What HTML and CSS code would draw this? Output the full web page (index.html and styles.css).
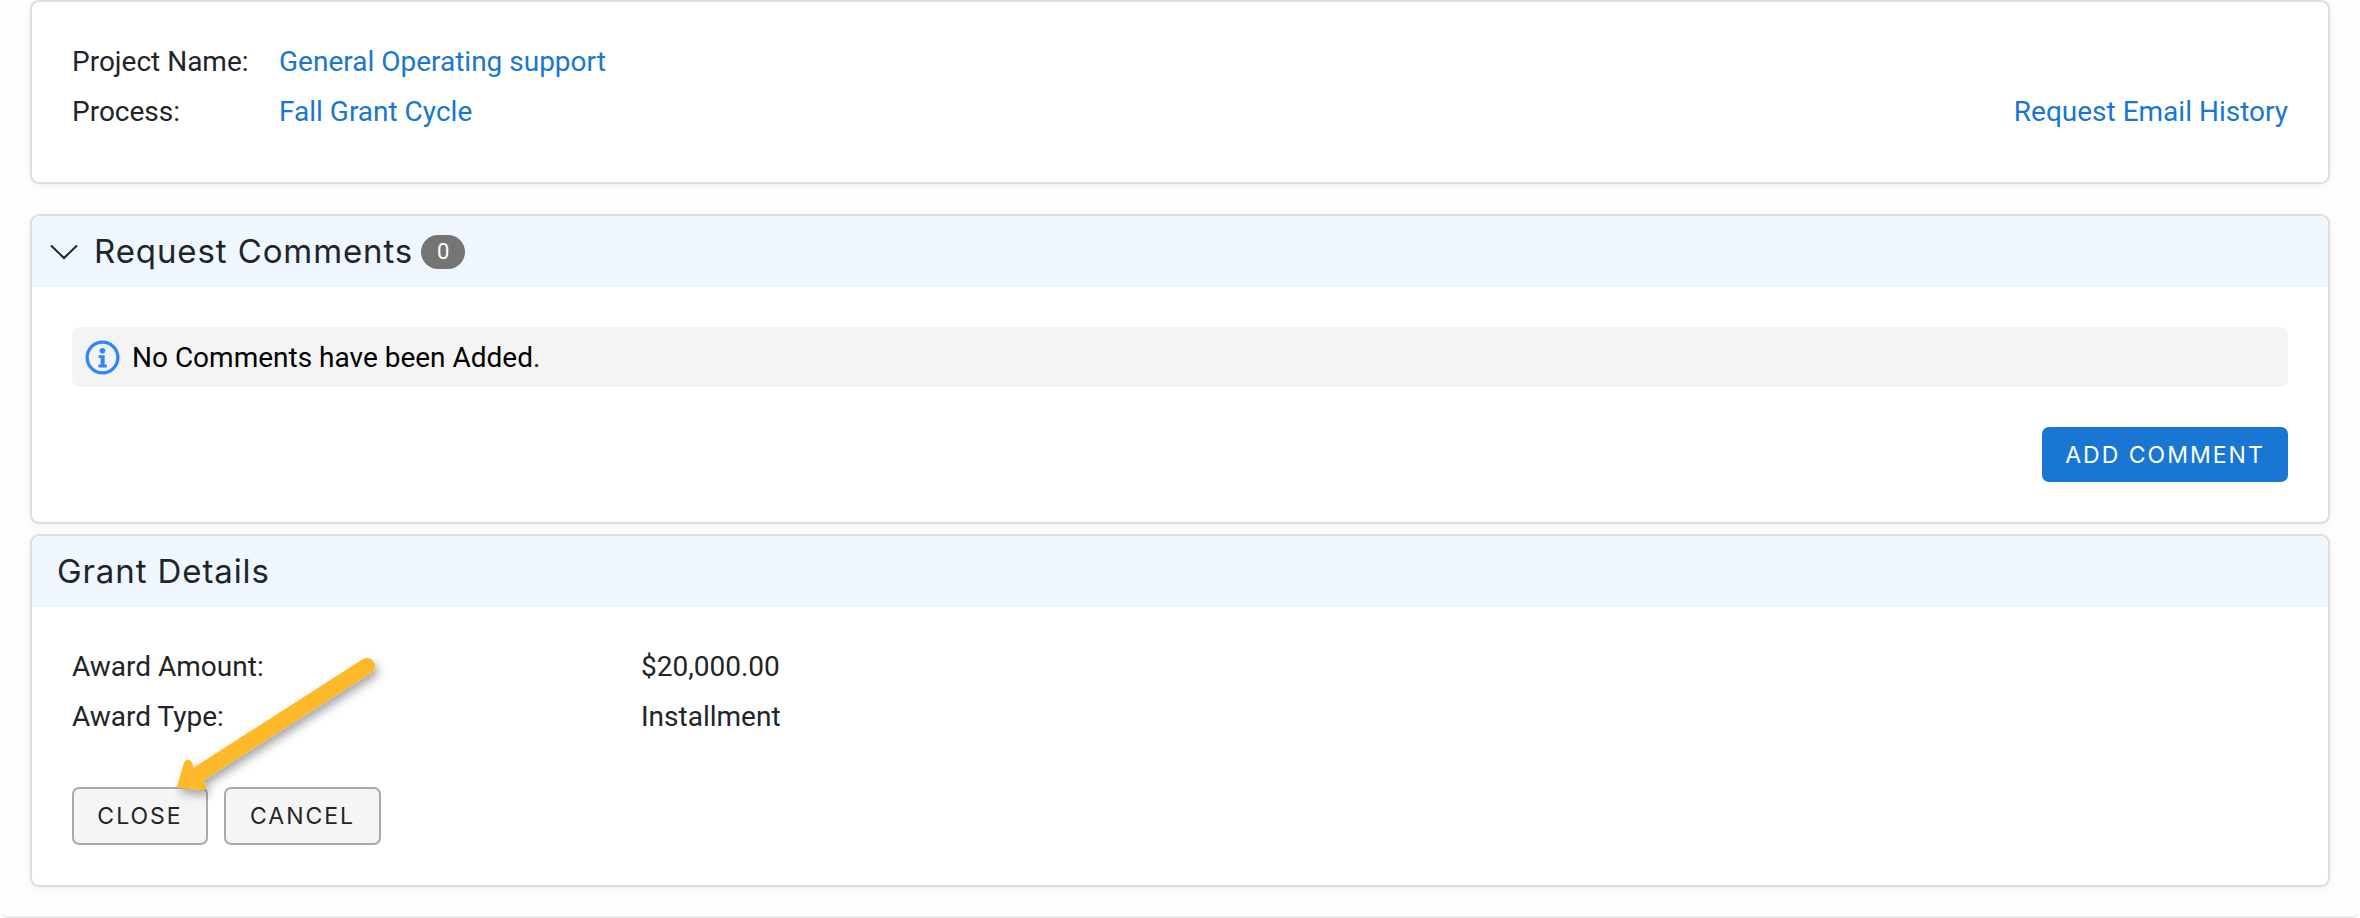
FILE: index.html
```html
<!DOCTYPE html>
<html lang="en">
<head>
<meta charset="utf-8">
<title>Grant Request</title>
<link rel="stylesheet" href="styles.css">
</head>
<body>
<main class="page">
  <section class="card summary">
    <div class="summary-rows">
      <div class="row"><span class="label">Project Name:</span><a class="link" href="#">General Operating support</a></div>
      <div class="row row-split">
        <span class="row-main"><span class="label">Process:</span><a class="link" href="#">Fall Grant Cycle</a></span>
        <a class="link" href="#">Request Email History</a>
      </div>
    </div>
  </section>

  <section class="card comments">
    <header class="card-head head-comments">
      <svg class="chevron" viewBox="0 0 28 16" width="28" height="16" aria-hidden="true"><path d="M1 1.5 14 14 27 1.5" fill="none" stroke="#212529" stroke-width="2"/></svg>
      <h2 class="title">Request Comments</h2>
      <span class="badge">0</span>
    </header>
    <div class="comments-body">
      <div class="notice">
        <svg class="info" viewBox="0 0 36 36" width="35" height="35" aria-hidden="true">
          <circle cx="18" cy="18" r="15.8" fill="none" stroke="#2f86f6" stroke-width="3.4"/>
          <circle cx="18" cy="11" r="2.9" fill="#2f86f6"/>
          <path d="M14 15.6h6.2v9.6h2.2v3h-8.6v-3h2.3v-6.6H14z" fill="#2f86f6"/>
        </svg>
        <span>No Comments have been Added.</span>
      </div>
      <div class="actions-right"><button class="btn btn-primary" type="button">ADD COMMENT</button></div>
    </div>
  </section>

  <section class="card details">
    <header class="card-head head-details"><h2 class="title">Grant Details</h2></header>
    <div class="details-body">
      <div class="row row-wide"><span class="label">Award Amount:</span><span class="value">$20,000.00</span></div>
      <div class="row row-wide"><span class="label">Award Type:</span><span class="value">Installment</span></div>
      <div class="buttons">
        <button class="btn btn-plain btn-close" type="button">CLOSE</button>
        <button class="btn btn-plain btn-cancel" type="button">CANCEL</button>
      </div>
    </div>
    <svg class="arrow" viewBox="0 0 240 160" width="240" height="160" aria-hidden="true">
      <defs><filter id="sh" x="-20%" y="-20%" width="150%" height="150%"><feDropShadow dx="3" dy="5" stdDeviation="5" flood-color="#000" flood-opacity=".35"/></filter></defs>
      <g filter="url(#sh)">
        <path d="M217 26 47 135" stroke="#fdb92a" stroke-width="16" stroke-linecap="round" fill="none"/>
        <path d="M28 147 35 123Q38 118 41 123L44 133 55 145Q56 149 53 149Z" fill="#fdb92a" stroke="#fdb92a" stroke-width="2" stroke-linejoin="round"/>
      </g>
    </svg>
  </section>
</main>
</body>
</html>
```
FILE: styles.css
```css
* { box-sizing: border-box; }
html, body { margin: 0; height: 918px; overflow: hidden; }
body {
  background: #fff;
  color: #212529;
  font-family: Roboto, "Liberation Sans", sans-serif;
  font-size: 28px;
}
.page {
  height: 918px;
  padding: 0 30px;
  background: #fdfdfd;
  border-bottom: 2px solid #ebebeb;
  border-radius: 0 0 8px 8px;
  display: flex;
  flex-direction: column;
}
.card {
  background: #fff;
  border: 2px solid #dedede;
  border-radius: 9px;
  box-shadow: 0 2px 6px rgba(0,0,0,.05);
  overflow: hidden;
  flex: none;
}
.summary { height: 184px; }
.summary-rows { padding: 34px 40px 0 40px; }
.row { display: flex; align-items: center; height: 50px; }
.row-split { justify-content: space-between; }
.row-main { display: flex; align-items: center; }
.label { width: 207px; color: #212529; }
.link { color: #1976d2; text-decoration: none; }
.value { color: #212529; }
.row-wide .label { width: 569px; }

.comments { margin-top: 30px; height: 310px; }
.card-head { display: flex; align-items: center; background: #eff6fe; height: 71px; }
.head-comments { padding-left: 18px; }
.chevron { margin-top: 1px; margin-right: 16px; flex: none; }
.title {
  margin: 0;
  font-family: Inter, "Noto Sans", sans-serif;
  font-weight: 400;
  font-size: 33px;
  letter-spacing: .9px;
  color: #212529;
  line-height: 1;
}
.badge {
  margin-left: 8px;
  width: 44px;
  height: 34px;
  border-radius: 17px;
  background: #757575;
  color: #fff;
  font-size: 22px;
  display: flex;
  align-items: center;
  justify-content: center;
}
.comments-body { padding: 40px 40px 0 40px; }
.notice {
  height: 60px;
  background: #f4f4f4;
  border-radius: 8px;
  display: flex;
  align-items: center;
  padding-left: 13px;
  color: #000;
}
.info { margin-right: 12px; flex: none; }
.actions-right { display: flex; justify-content: flex-end; margin-top: 40px; }
.btn {
  font-family: Inter, "Noto Sans", sans-serif;
  font-size: 23px;
  letter-spacing: 2px;
  border-radius: 7px;
  cursor: pointer;
  padding: 0;
}
.btn-primary {
  width: 246px;
  height: 55px;
  border: 0;
  background: #1976d2;
  color: #fff;
  font-weight: 400;
}
.details { margin-top: 10px; height: 353px; position: relative; }
.head-details { padding-left: 25px; }
.details-body { padding: 34px 40px 0 40px; }
.buttons { display: flex; gap: 16px; margin-top: 46px; }
.btn-plain {
  height: 58px;
  background: #f5f5f5;
  color: #212529;
  border: 2px solid #aaa;
  font-weight: 400;
}
.btn-close { width: 136px; }
.btn-cancel { width: 157px; }
.arrow { position: absolute; left: 118px; top: 104px; overflow: visible; }
```
